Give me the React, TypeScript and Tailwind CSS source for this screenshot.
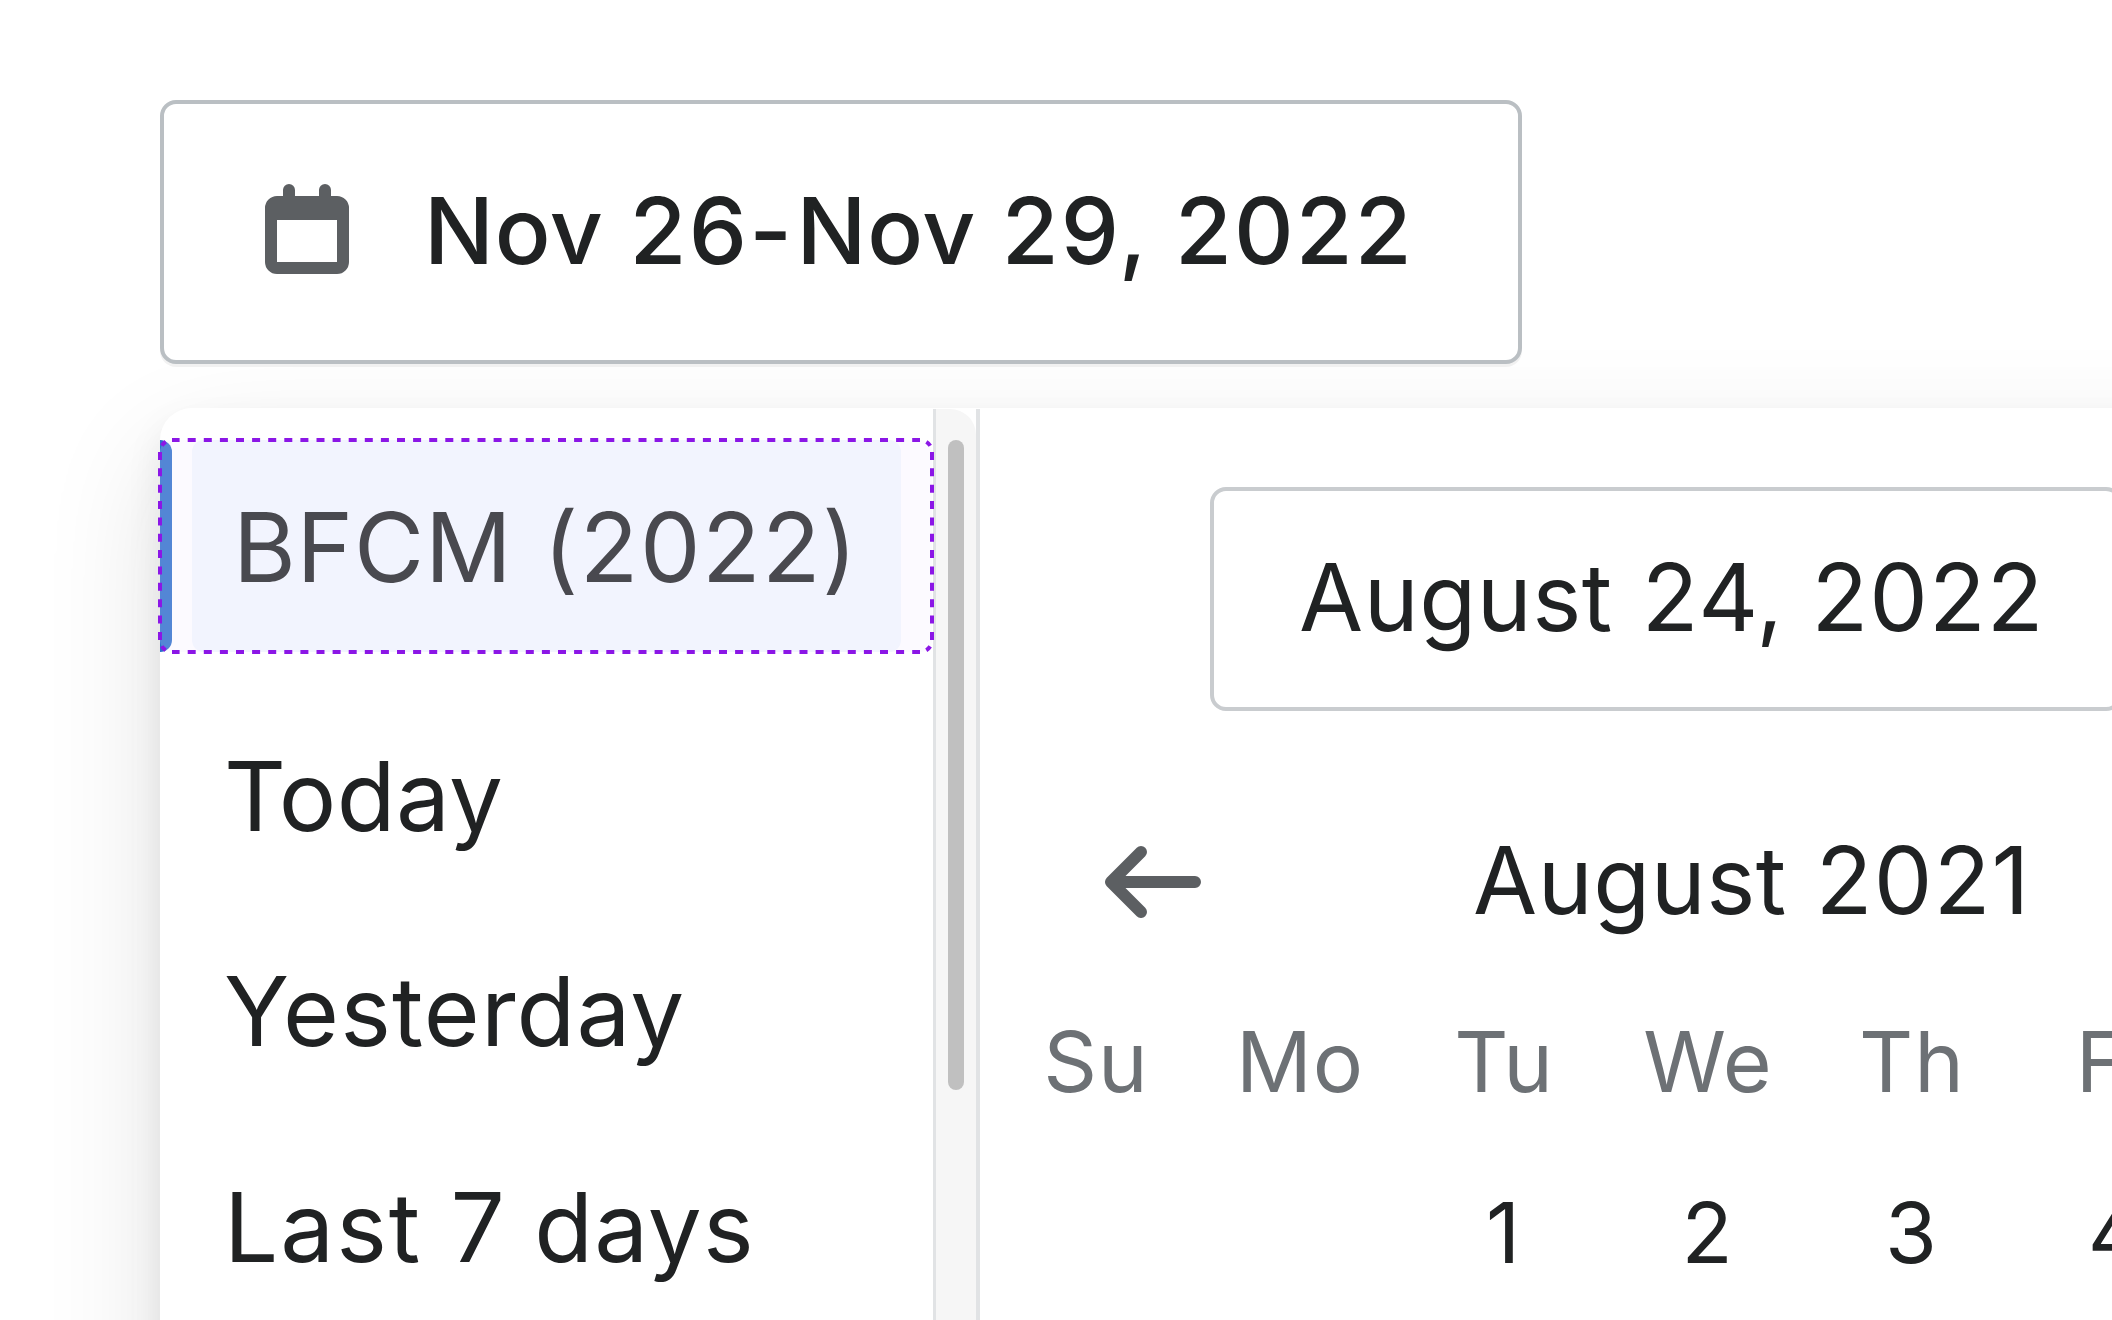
type Run = { text: string; tracking: string };

const presets: { id: string; runs: Run[] }[] = [
  { id: 'today', runs: [{ text: 'Today', tracking: 'tracking-[0.4px]' }] },
  { id: 'yesterday', runs: [{ text: 'Yesterday', tracking: 'tracking-[1.2px]' }] },
  {
    id: 'last-7-days',
    runs: [
      { text: 'Last', tracking: 'tracking-[2px]' },
      { text: ' 7 days', tracking: 'tracking-[1.2px]' },
    ],
  },
];

const rangeLabel: Run[] = [
  { text: 'Nov ', tracking: 'tracking-[0.9px]' },
  { text: '26', tracking: 'tracking-[2.2px]' },
  { text: '-', tracking: 'tracking-[4.6px]' },
  { text: 'Nov ', tracking: 'tracking-[0.8px]' },
  { text: '29, ', tracking: 'tracking-[2.2px]' },
  { text: '2022', tracking: 'tracking-[2px]' },
];

const weekdays = ['Su', 'Mo', 'Tu', 'We', 'Th', 'Fr'];
const days = ['', '', '1', '2', '3', '4'];

function Runs({ runs }: { runs: Run[] }) {
  return (
    <>
      {runs.map((r, i) => (
        <span key={i} className={r.tracking}>
          {r.text}
        </span>
      ))}
    </>
  );
}

function CalendarIcon() {
  return (
    <svg className="h-[90px] w-[84px] shrink-0" viewBox="0 0 14 15" fill="#5c5f62">
      <path
        fillRule="evenodd"
        d="M4 0a1 1 0 0 0-1 1v1H2a2 2 0 0 0-2 2v9a2 2 0 0 0 2 2h10a2 2 0 0 0 2-2V4a2 2 0 0 0-2-2h-1V1a1 1 0 1 0-2 0v1H5V1a1 1 0 0 0-1-1zM2 6h10v7H2z"
      />
    </svg>
  );
}

function ArrowLeftIcon() {
  return (
    <svg className="h-[72px] w-[96px] shrink-0" viewBox="2 4 16 12" fill="#5c5f62">
      <path d="M17 9H5.414l3.293-3.293a.999.999 0 1 0-1.414-1.414l-5 5a.999.999 0 0 0 0 1.414l5 5a.997.997 0 0 0 1.414 0 .999.999 0 0 0 0-1.414L5.414 11H17a1 1 0 1 0 0-2z" />
    </svg>
  );
}

function DashedOutline() {
  return (
    <svg
      className="pointer-events-none absolute -left-[2px] -top-[2px] h-[216px] w-[776px]"
      viewBox="-2 -2 776 216"
      fill="none"
      stroke="#8b16e6"
      strokeWidth="4"
    >
      <path d="M12 0H760M12 212H760" strokeDasharray="8 8.1" strokeDashoffset="0.4" />
      <path d="M0 12V200M772 12V200" strokeDasharray="8 8.37" strokeDashoffset="0.1" />
      <path
        d="M0 12A12 12 0 0 1 12 0M760 0A12 12 0 0 1 772 12M772 200A12 12 0 0 1 760 212M12 212A12 12 0 0 1 0 200"
        strokeDasharray="0 6.7 5.45 6.7"
      />
    </svg>
  );
}

export default function App() {
  return (
    <div className="flex h-[1320px] w-[2112px] flex-col items-start overflow-hidden bg-white pl-40 pt-[100px] font-['Inter',sans-serif] text-[#202223] [font-optical-sizing:none]">
      <button className="relative z-10 flex h-[264px] w-[1362px] shrink-0 items-center rounded-[16px] border-4 border-[#babfc3] bg-white pb-[6px] pl-[101px] shadow-[0_3px_0_rgba(0,0,0,0.05)]">
        <CalendarIcon />
        <span className="ml-[75px] whitespace-pre pt-[3px] text-[92.5px] font-medium leading-none">
          <Runs runs={rangeLabel} />
        </span>
      </button>

      <div className="mt-11 flex h-[1500px] w-[2400px] shrink-0 rounded-[32px] bg-white shadow-[0_18px_36px_rgba(23,24,24,0.08),0_48px_120px_rgba(23,24,24,0.12)]">
        <div className="w-[772px] shrink-0 pt-8">
          <div className="relative flex h-[212px] items-stretch">
            <div className="w-3 rounded-r-[12px] bg-[#2c6ecb]" />
            <div className="ml-5 flex w-[709px] items-center rounded-[12px] bg-[#f3f8fe] pl-[41px] pt-[2px]">
              <span className="whitespace-pre text-[96px] leading-none">
                <span className="tracking-[0.8px]">BFCM</span>
                <span className="tracking-[3.8px]"> </span>
                <span className="tracking-[1.5px]">(2022)</span>
              </span>
            </div>
            <div className="pointer-events-none absolute inset-0 rounded-[12px] bg-[rgba(240,230,255,0.2)]" />
            <DashedOutline />
          </div>
          <div className="mt-9 flex flex-col">
            {presets.map((p) => (
              <div key={p.id} className="flex h-[215.6px] items-center pl-[64px]">
                <span className="whitespace-pre text-[96px] leading-none">
                  <Runs runs={p.runs} />
                </span>
              </div>
            ))}
          </div>
        </div>

        <div className="mt-px flex w-12 shrink-0 border-r-4 border-[#e1e3e5]">
          <div className="ml-px w-[3px] bg-[#e1e3e5]" />
          <div className="flex w-10 justify-center rounded-tr-[26px] bg-[#f6f6f6] pt-[31px]">
            <div className="h-[650px] w-4 rounded-full bg-[#c0c0c0]" />
          </div>
        </div>

        <div className="w-[1432px] shrink-0">
          <div className="ml-[230px] mt-[79px] flex h-[224px] w-[912px] items-center rounded-[16px] border-4 border-[#c9cccf] bg-white pb-[3px] pl-[85px]">
            <span className="whitespace-pre text-[93px] leading-none">
              <span className="tracking-[0.5px]">August</span>
              <span className="tracking-[3px]"> </span>
              <span className="tracking-[1.1px]">24, 2022</span>
            </span>
          </div>
          <div className="mt-[123px] flex h-24 items-center pl-[125px]">
            <ArrowLeftIcon />
            <span className="ml-[272px] whitespace-pre pb-[3px] text-[93px] leading-none">
              <span className="tracking-[0.5px]">August</span>
              <span className="tracking-[3px]"> </span>
              <span className="tracking-[1.2px]">2021</span>
            </span>
          </div>
          <div className="ml-[14px] mt-[90px] grid w-[1224px] grid-cols-6 text-center text-[84px] leading-none tracking-[1px]">
            {weekdays.map((d) => (
              <span key={d} className="text-[#6d7175]">
                {d}
              </span>
            ))}
          </div>
          <div className="ml-[13px] mt-[87px] grid w-[1224px] grid-cols-6 text-center text-[84px] leading-none">
            {days.map((d, i) => (
              <span key={i}>{d}</span>
            ))}
          </div>
        </div>
      </div>
    </div>
  );
}
